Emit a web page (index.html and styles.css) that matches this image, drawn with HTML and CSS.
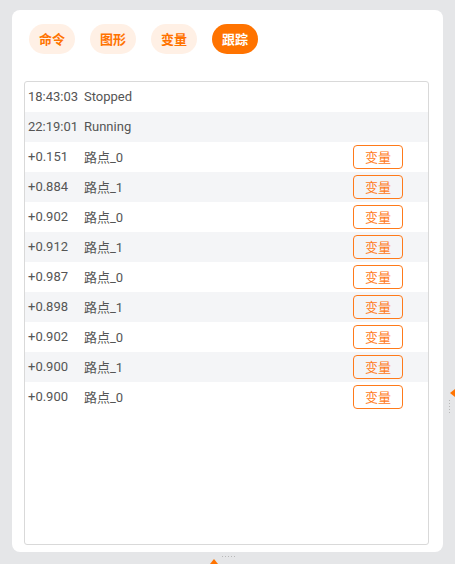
FILE: index.html
```html
<!DOCTYPE html>
<html lang="zh">
<head>
<meta charset="utf-8">
<link rel="stylesheet" href="styles.css">
</head>
<body>
<div class="card">
  <div class="tabs">
    <span class="tab">命令</span>
    <span class="tab">图形</span>
    <span class="tab">变量</span>
    <span class="tab active">跟踪</span>
  </div>
  <div class="log">
    <div class="row"><span class="t">18:43:03</span><span class="l">Stopped</span></div>
    <div class="row"><span class="t">22:19:01</span><span class="l">Running</span></div>
    <div class="row"><span class="t">+0.151</span><span class="l">路点_0</span><span class="btn">变量</span></div>
    <div class="row"><span class="t">+0.884</span><span class="l">路点_1</span><span class="btn">变量</span></div>
    <div class="row"><span class="t">+0.902</span><span class="l">路点_0</span><span class="btn">变量</span></div>
    <div class="row"><span class="t">+0.912</span><span class="l">路点_1</span><span class="btn">变量</span></div>
    <div class="row"><span class="t">+0.987</span><span class="l">路点_0</span><span class="btn">变量</span></div>
    <div class="row"><span class="t">+0.898</span><span class="l">路点_1</span><span class="btn">变量</span></div>
    <div class="row"><span class="t">+0.902</span><span class="l">路点_0</span><span class="btn">变量</span></div>
    <div class="row"><span class="t">+0.900</span><span class="l">路点_1</span><span class="btn">变量</span></div>
    <div class="row"><span class="t">+0.900</span><span class="l">路点_0</span><span class="btn">变量</span></div>
  </div>
</div>
<div class="handle-right"><span class="arrow-left"></span><span class="dots-v"></span></div>
<div class="handle-bottom"><span class="arrow-up"></span><span class="dots-h"></span></div>
</body>
</html>
```
FILE: styles.css
```css
html, body {
  margin: 0;
  padding: 0;
}
body {
  background: #e5e6e8;
  width: 455px;
  height: 564px;
  overflow: hidden;
  position: relative;
  font-family: Roboto, "Noto Sans CJK SC", sans-serif;
}
.card {
  position: relative;
  margin: 10px 0 0 12px;
  width: 431px;
  height: 542px;
  box-sizing: border-box;
  background: #fff;
  border-radius: 8px;
  padding: 14px 14px 7px 12px;
  display: flex;
  flex-direction: column;
}
.tabs {
  display: flex;
  gap: 15px;
  padding-left: 5px;
  height: 30px;
  margin-bottom: 27px;
}
.tab {
  height: 30px;
  line-height: 30px;
  padding: 0 10px;
  border-radius: 15px;
  background: #fff0e5;
  color: #ff7300;
  font-family: "Noto Sans CJK SC", sans-serif;
  font-weight: 700;
  font-size: 13px;
}
.tab.active {
  background: #ff7300;
  color: #fff;
}
.log {
  flex: 1;
  border: 1px solid #d9d9d9;
  border-radius: 3px;
  overflow: hidden;
}
.row {
  display: flex;
  align-items: center;
  height: 30px;
  box-sizing: border-box;
  padding-left: 3px;
  padding-bottom: 1px;
  font-size: 13px;
  color: #555;
}
.row:nth-child(even) {
  background: #f4f5f7;
}
.t {
  width: 56px;
  flex: none;
}
.l {
  flex: 1;
}
.btn {
  width: 50px;
  height: 24px;
  box-sizing: border-box;
  border: 1px solid #ff7a1a;
  border-radius: 4px;
  color: #ff7a1a;
  font-family: "Noto Sans CJK SC", sans-serif;
  font-size: 13px;
  line-height: 22px;
  text-align: center;
  margin-right: 25px;
}
.handle-right {
  position: absolute;
  left: 448px;
  top: 389px;
  width: 7px;
  height: 28px;
}
.arrow-left {
  position: absolute;
  left: 2px;
  top: 0;
  width: 0;
  height: 0;
  border-top: 4px solid transparent;
  border-bottom: 4px solid transparent;
  border-right: 5px solid #ff7300;
}
.dots-v {
  position: absolute;
  left: 1px;
  top: 11px;
  width: 1px;
  height: 15px;
  background: repeating-linear-gradient(to bottom, #b8b8b8 0 1px, transparent 1px 3px);
}
.handle-bottom {
  position: absolute;
  left: 208px;
  top: 554px;
  width: 32px;
  height: 10px;
}
.arrow-up {
  position: absolute;
  left: 2px;
  top: 5px;
  width: 0;
  height: 0;
  border-left: 4px solid transparent;
  border-right: 4px solid transparent;
  border-bottom: 5px solid #ff7300;
}
.dots-h {
  position: absolute;
  left: 14px;
  top: 2px;
  width: 15px;
  height: 1px;
  background: repeating-linear-gradient(to right, #b8b8b8 0 1px, transparent 1px 3px);
}
```
